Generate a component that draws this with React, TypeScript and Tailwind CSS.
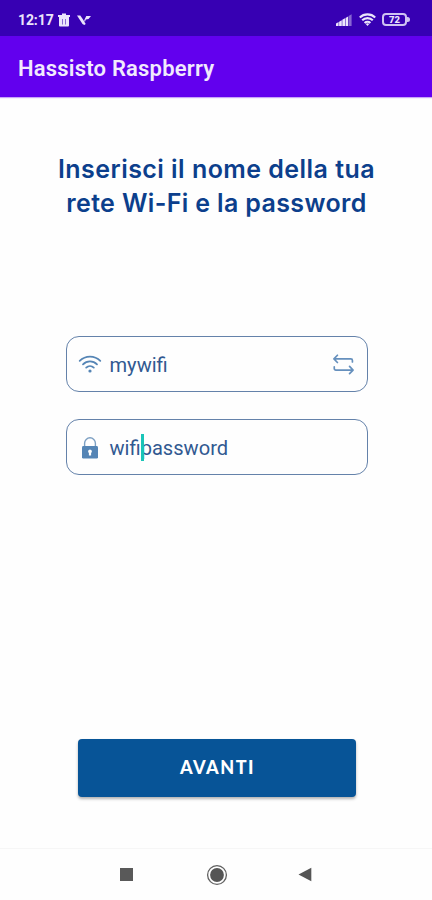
import React, { useState } from 'react';

function StatusBar() {
  return (
    <div className="flex h-9 items-center bg-[#3700b3] pl-[18px] pr-[22px] pt-[3px] text-[#ebe4fb]">
      <span className="w-[35px] whitespace-nowrap text-[14px] font-bold leading-4 tracking-[-0.1px]">12:17</span>
      <svg className="ml-[5px] h-[14px] w-3" viewBox="0 0 12 14" fill="currentColor">
        <path d="M4 0.5h4v1.5h4v2H0v-2h4z" />
        <path d="M1 4h10v8.5a1 1 0 0 1-1 1H2a1 1 0 0 1-1-1z" />
        <path d="M4.5 6v5.5M7.5 6v5.5" stroke="#3700b3" strokeWidth="0.9" opacity="0.6" />
      </svg>
      <svg className="ml-[7px] h-3 w-[15px]" viewBox="0 0 15 12" fill="currentColor">
        <path d="M0 1.5h3.3l3.2 4.7L8.7 10 7.3 11 5.5 10z" />
        <path d="M7.2 6.2 9.3 2h4.7l-2.5 3-2.7.4L7.9 8z" />
      </svg>

      <svg className="ml-auto h-3 w-4" viewBox="0 0 16 12" fill="currentColor">
        <path d="M0 9.5 2.6 8v4H0z" />
        <path d="M3.1 7.7 5.8 6.2V12H3.1z" />
        <path d="M6.3 5.8 9 4.3V12H6.3z" />
        <path d="M9.5 3.9l2.6-1.5V12H9.5z" />
        <path d="M12.6 2 15.6.3V12h-3z" opacity="0.45" />
      </svg>
      <svg className="ml-[7px] h-[13px] w-[17px]" viewBox="0 0 17 13" fill="none" stroke="currentColor" strokeWidth="2.1">
        <path d="M.8 4.5a11 11 0 0 1 15.4 0" />
        <path d="M3.2 7.3a7.5 7.5 0 0 1 10.6 0" />
        <path d="M5.6 10a4.2 4.2 0 0 1 5.8 0" />
        <path d="M8.5 13 6.7 11.1a2.6 2.6 0 0 1 3.6 0z" fill="currentColor" stroke="none" />
      </svg>
      <div className="ml-1.5 flex items-center">
        <div className="flex h-[13px] w-[25px] items-center justify-center rounded-[4px] border-2 border-[#cfc2f2] text-[9.5px] font-black leading-none">
          72
        </div>
        <div className="h-[5px] w-[3px] rounded-r-sm bg-[#cfc2f2]" />
      </div>
    </div>
  );
}

function WifiIcon() {
  return (
    <svg className="h-[19px] w-6" viewBox="0 0 24 19" fill="none" stroke="#5585b5" strokeWidth="1.8" strokeLinecap="round">
      <path d="M1.7 5.8a14.6 14.6 0 0 1 20.6 0" />
      <path d="M5 9.3a10 10 0 0 1 14 0" />
      <path d="M8.2 12.6a5.5 5.5 0 0 1 7.6 0" />
      <circle cx="12" cy="16" r="1.6" fill="#5585b5" stroke="none" />
    </svg>
  );
}

function LockIcon() {
  return (
    <svg className="h-[22px] w-6" viewBox="0 0 24 22" fill="none">
      <path d="M6.6 10V6.2a5.4 5.4 0 0 1 10.8 0V10" stroke="#7c9fc2" strokeWidth="1.4" />
      <rect x="4" y="9" width="16" height="12.6" rx="1.4" fill="#5585b5" />
      <path d="M12 12.4a2 2 0 0 1 1.1 3.6v2.4h-2.2V16a2 2 0 0 1 1.1-3.6z" fill="#fff" />
    </svg>
  );
}

function SwapIcon() {
  return (
    <svg className="h-[21px] w-[21px]" viewBox="0 0 20 20" fill="none" stroke="#6690bd" strokeWidth="1.6" strokeLinecap="round" strokeLinejoin="round">
      <path d="M18.5 7.5V6.2a1.5 1.5 0 0 0-1.5-1.5H1M4.2 1.2.9 4.7l3.3 3.4" />
      <path d="M1.2 12.2v1.6a1.5 1.5 0 0 0 1.5 1.5H19M15.8 11.8l3.3 3.5-3.3 3.4" />
    </svg>
  );
}

function Field({ children }: { children: React.ReactNode }) {
  return (
    <div className="flex h-[56px] w-[302px] items-center rounded-[13px] border border-[#6482aa] pl-[11px] pr-[13px] pt-px text-[20.1px] leading-6 text-[#315991]">
      {children}
    </div>
  );
}

export default function App() {
  const [network] = useState('mywifi');

  return (
    <div className="flex h-[900px] w-[432px] flex-col bg-[#fefefe] font-['Roboto',sans-serif]">
      <StatusBar />
      <header className="flex h-[61px] items-center bg-[#6200ee] pl-[18px] pt-1 shadow-[0_1px_1px_rgba(98,0,238,0.35)]">
        <h1 className="whitespace-nowrap text-[22px] font-semibold leading-7 tracking-[0.2px] text-[#f1eafd]">Hassisto Raspberry</h1>
      </header>

      <main className="flex flex-1 flex-col items-center pl-px">
        <h2 className="mt-[55px] whitespace-nowrap text-center font-['Inter',sans-serif] text-[25px] font-semibold leading-[34px] text-[#0c3f8c]">
          <span className="block tracking-[0.46px]">Inserisci il nome della tua</span>
          <span className="block tracking-[0.36px]">rete Wi-Fi e la password</span>
        </h2>

        <div className="mt-[116px] flex flex-col gap-[27px]">
          <Field>
            <WifiIcon />
            <span className="ml-2">{network}</span>
            <span className="ml-auto">
              <SwapIcon />
            </span>
          </Field>
          <Field>
            <LockIcon />
            <span className="ml-2 flex items-center">
              wifi
              <span className="relative w-0">
                <span className="absolute left-0 -top-[14px] h-[27px] w-[3px] bg-[#19c5b8]" />
              </span>
              password
            </span>
          </Field>
        </div>

        <button className="mt-auto h-[58px] w-[278px] rounded-[4px] bg-[#075497] pb-[2px] pl-[2px] font-['Lato',sans-serif] text-[18px] font-black tracking-[1.5px] text-white shadow-[0_2px_3px_rgba(0,0,0,0.3)]">
          AVANTI
        </button>
        <div className="h-[51px] shrink-0" />
      </main>

      <nav className="flex h-[52px] items-center border-t border-[#f6f6f6] pl-[120px]">
        <div className="h-[13px] w-[13px] bg-[#595959]" />
        <svg className="ml-[73px] h-[22px] w-[22px]" viewBox="0 0 22 22">
          <circle cx="11" cy="11" r="9.4" fill="none" stroke="#606060" strokeWidth="1.3" />
          <circle cx="11" cy="11" r="6.9" fill="#555" />
        </svg>
        <svg className="ml-[70px] h-[15px] w-[14px]" viewBox="0 0 14 15">
          <path d="M.5 7.5 13.3.8v13.4z" fill="#555" />
        </svg>
      </nav>
    </div>
  );
}
